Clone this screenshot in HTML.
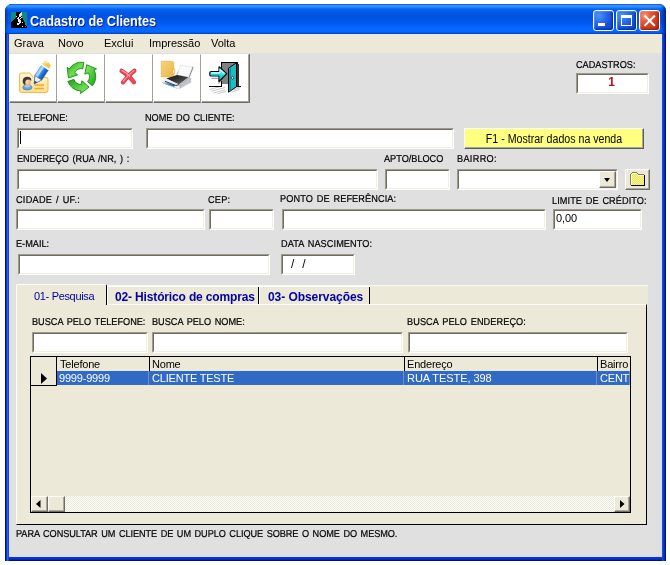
<!DOCTYPE html>
<html>
<head>
<meta charset="utf-8">
<title>Cadastro de Clientes</title>
<style>
*{box-sizing:border-box;margin:0;padding:0}
html,body{width:670px;height:565px;background:#fff;overflow:hidden}
body{font-family:"Liberation Sans",sans-serif;position:relative;color:#000}
.abs{position:absolute}
/* window frame */
#win{position:absolute;left:5px;top:4px;width:661px;height:557px;border-radius:7px 7px 0 0;overflow:hidden;
 background:
  linear-gradient(to right,#00138c 0,#00138c 1px,#0831d9 1px,#0831d9 2px,#2a64e4 2px,#2a64e4 3px,#1a4cc0 3px,#1a4cc0 4px) left top/4px 100% no-repeat,
  linear-gradient(to right,#1c4cd4 0,#1c4cd4 1px,#0838d8 1px,#0838d8 2px,#0428b8 2px,#0428b8 3px,#001080 3px,#001080 4px) right top/4px 100% no-repeat,
  linear-gradient(to bottom,#0a34d4 0,#0a34d4 1px,#0831d9 1px,#0831d9 2px,#0428b8 2px,#0428b8 3px,#001080 3px,#001080 4px) left bottom/100% 4px no-repeat,
  #0831d9}
#title{position:absolute;left:0;top:0;width:661px;height:30px;
 background:linear-gradient(to right,rgba(0,20,130,.55) 0,rgba(0,20,130,0) 3px,rgba(0,20,130,0) 655px,rgba(0,20,130,.35) 658px,rgba(0,16,110,.8) 661px),linear-gradient(to bottom,#0a3fb8 0px,#2f86fb 1px,#3a93ff 2px,#2a8bff 3px,#107afc 4px,#0467f0 5px,#0360ec 6px,#0058e6 8px,#0054e3 10px,#0054e3 14px,#0056e8 17px,#005bf2 20px,#0262fb 22px,#0468ff 25px,#0567ff 28px,#0452e0 29px,#0338b4 30px);}
#client{position:absolute;left:4px;top:30px;width:653px;height:523px;background:#e0e0e0;border:1px solid #d0e2fb;border-top:none}
#menubar{position:absolute;left:-1px;top:0;width:653px;height:19px;background:#ece9d8}
.mi{position:absolute;font-size:11px;line-height:13px;white-space:nowrap}
.ttl{position:absolute;font-size:14px;font-weight:bold;color:#fff;line-height:16px;white-space:nowrap;text-shadow:1px 1px 0 #0a1883;transform:scaleX(.905);transform-origin:0 0}
.lbl{position:absolute;-webkit-text-stroke:.22px #000;font-size:10px;line-height:11px;white-space:nowrap;color:#000;text-rendering:geometricPrecision;transform:translate(-1px,0) scaleX(.915);transform-origin:0 0;word-spacing:1.2px}
.inp{position:absolute;background:#fff;border:1px solid;border-color:#9d9a8c #fff #fff #9d9a8c;}
.inp:before{content:"";position:absolute;left:0;top:0;right:0;bottom:0;border:1px solid;border-color:#6f6d62 #f1efe2 #f1efe2 #6f6d62}
.tb{position:absolute;width:48px;height:49px;background:#fff;border-left:1px solid #fff;border-top:1px solid #fff;border-right:1px solid #a4a298;border-bottom:1px solid #6e6c62;box-shadow:inset 0 -1px 0 #a4a298}

#f1{background:#ffff80;border:1px solid;border-color:#fff #5e5c50 #5e5c50 #fff;box-shadow:inset -1px -1px 0 #a8a694}
#f1 span{position:absolute;left:0;right:0;top:3px;font-size:12px;line-height:14px;text-align:center;white-space:nowrap;transform:scaleX(.885)}
#tabpanel{background:#ece9d8;border:1px solid;border-color:#fff #000 #000 #fff}
#tab1{background:#ece9d8;border-left:1px solid #fff;border-top:1px solid #fff;border-right:1px solid #000;border-radius:2px 2px 0 0}
#tab1 span{position:absolute;left:17px;top:5px;font-size:11px;line-height:13px;color:#00009c;white-space:nowrap;letter-spacing:-.33px}
.tabx{background:#ece9d8;border-top:1px solid #fff}
.tabx:after{content:"";position:absolute;right:0;top:0;width:1px;height:17px;background:#000}
.tabx:before{content:"";position:absolute;left:0;top:0;width:1px;height:17px;background:#fff}
.tabx span{position:absolute;top:3px;font-size:12px;font-weight:bold;line-height:14px;color:#0000a4;white-space:nowrap;letter-spacing:-.15px}
#grid{background:#ece9d8;border:1px solid #000;overflow:hidden}

.cb{position:absolute;top:10px;width:21px;height:21px;border:1px solid #fff;border-radius:3px;background:radial-gradient(circle at 25% 25%,#4f94f8 0%,#2a6bea 35%,#1650d8 65%,#0c3fc0 100%);box-shadow:inset -1px -1px 2px rgba(0,20,120,.55), inset 1px 1px 1px rgba(120,170,255,.5)}
.cb.x{background:radial-gradient(circle at 25% 25%,#f0997a 0%,#e2583a 30%,#d23c1c 60%,#b02a0a 100%);box-shadow:inset -1px -1px 2px rgba(110,20,0,.6), inset 1px 1px 1px rgba(255,180,150,.5)}
.cb svg{position:absolute;left:-1px;top:-1px}

.gh{position:absolute;top:0;height:15px;background:#ece9d8;border-right:1px solid #000;border-bottom:1px solid #000}
.gh span,.gc span{position:absolute;left:2px;top:1px;font-size:11px;line-height:13px;white-space:nowrap;letter-spacing:-.2px}
.gi{position:absolute;background:#ece9d8;border-right:1px solid #000;border-bottom:1px solid #000}
.gr{position:absolute;background:#316ac5}
.gc{position:absolute;top:14px;height:14px;border-right:1px solid #7a8fb8;overflow:hidden}
.gc span{color:#fff;top:1px;left:2px}
#hsb{background-color:#fff;background-image:linear-gradient(45deg,#ece9d8 25%,transparent 25%,transparent 75%,#ece9d8 75%),linear-gradient(45deg,#ece9d8 25%,transparent 25%,transparent 75%,#ece9d8 75%);background-size:2px 2px;background-position:0 0,1px 1px}
.sbtn{position:absolute;width:16px;height:16px;background:#ece9d8;border:1px solid;border-color:#fff #716f64 #716f64 #fff;box-shadow:inset -1px -1px 0 #aca899}
#cbb{position:absolute;right:1px;top:1px;width:17px;height:17px;background:#ece9d8;border:1px solid;border-color:#fff #716f64 #716f64 #fff;box-shadow:inset -1px -1px 0 #aca899}
#cbb:after{content:"";position:absolute;left:4px;top:6px;border:solid transparent;border-width:4px 3.500px 0 3.500px;border-top-color:#000}
#fold{background:#ece9d8;border:1px solid;border-color:#fff #716f64 #716f64 #fff;box-shadow:inset -1px -1px 0 #aca899}
</style>
</head>
<body>
<div id="win">
 <div id="title"></div>
 <div id="client"><div id="menubar"></div></div>
</div>
<!-- everything below is positioned in page coordinates -->
<div id="pg" class="abs" style="left:0;top:0;width:670px;height:565px;will-change:transform">

 <!-- caption icon -->
 <svg class="abs" style="left:11px;top:12px" width="16" height="16" viewBox="0 0 16 16" shape-rendering="crispEdges"><rect width="16" height="16" fill="#0c8c84"/><rect x="5" y="0" width="5" height="1" fill="#000"/><rect x="10" y="0" width="1" height="1" fill="#9cc8c4"/><rect x="5" y="1" width="4" height="1" fill="#000"/><rect x="9" y="1" width="2" height="1" fill="#e6e6e6"/><rect x="5" y="2" width="3" height="1" fill="#000"/><rect x="8" y="2" width="3" height="1" fill="#e6e6e6"/><rect x="5" y="3" width="3" height="1" fill="#000"/><rect x="8" y="3" width="2" height="1" fill="#e6e6e6"/><rect x="10" y="3" width="1" height="1" fill="#9cc8c4"/><rect x="5" y="4" width="1" height="1" fill="#a0e0dc"/><rect x="6" y="4" width="2" height="1" fill="#000"/><rect x="8" y="4" width="2" height="1" fill="#e6e6e6"/><rect x="10" y="4" width="1" height="1" fill="#000"/><rect x="5" y="5" width="2" height="1" fill="#000"/><rect x="7" y="5" width="1" height="1" fill="#e6e6e6"/><rect x="8" y="5" width="2" height="1" fill="#000"/><rect x="10" y="5" width="1" height="1" fill="#e6e6e6"/><rect x="4" y="6" width="2" height="1" fill="#000"/><rect x="6" y="6" width="2" height="1" fill="#e6e6e6"/><rect x="8" y="6" width="1" height="1" fill="#000"/><rect x="9" y="6" width="1" height="1" fill="#e6e6e6"/><rect x="10" y="6" width="2" height="1" fill="#000"/><rect x="3" y="7" width="4" height="1" fill="#000"/><rect x="7" y="7" width="2" height="1" fill="#e6e6e6"/><rect x="9" y="7" width="3" height="1" fill="#000"/><rect x="2" y="8" width="5" height="1" fill="#000"/><rect x="7" y="8" width="3" height="1" fill="#e6e6e6"/><rect x="10" y="8" width="3" height="1" fill="#000"/><rect x="1" y="9" width="6" height="1" fill="#000"/><rect x="7" y="9" width="3" height="1" fill="#e6e6e6"/><rect x="10" y="9" width="3" height="1" fill="#000"/><rect x="0" y="10" width="8" height="1" fill="#000"/><rect x="8" y="10" width="2" height="1" fill="#e6e6e6"/><rect x="10" y="10" width="1" height="1" fill="#000"/><rect x="11" y="10" width="1" height="1" fill="#e6e6e6"/><rect x="12" y="10" width="2" height="1" fill="#000"/><rect x="0" y="11" width="6" height="1" fill="#000"/><rect x="6" y="11" width="3" height="1" fill="#e6e6e6"/><rect x="9" y="11" width="5" height="1" fill="#000"/><rect x="0" y="12" width="6" height="1" fill="#000"/><rect x="6" y="12" width="2" height="1" fill="#e6e6e6"/><rect x="8" y="12" width="6" height="1" fill="#000"/><rect x="0" y="13" width="15" height="1" fill="#000"/><rect x="0" y="14" width="11" height="1" fill="#000"/><rect x="11" y="14" width="1" height="1" fill="#e6e6e6"/><rect x="12" y="14" width="2" height="1" fill="#000"/><rect x="15" y="14" width="1" height="1" fill="#000"/><rect x="0" y="15" width="16" height="1" fill="#000"/></svg>
 <div class="cb" style="left:593px"><svg width="21" height="21"><rect x="5" y="13" width="7" height="3" fill="#fff"/></svg></div>
 <div class="cb" style="left:616px"><svg width="21" height="21"><path d="M5 5h11v11h-11z M6 8v7h9v-7z" fill="#fff" fill-rule="evenodd"/></svg></div>
 <div class="cb x" style="left:639px"><svg width="21" height="21"><path d="M6.200 6.200l9 9M15.200 6.200l-9 9" stroke="#fff" stroke-width="2" stroke-linecap="square"/></svg></div>
 <div class="ttl" style="left:30px;top:13px">Cadastro de Clientes</div>
 <span class="mi" style="left:14px;top:37px">Grava</span>
 <span class="mi" style="left:58px;top:37px">Novo</span>
 <span class="mi" style="left:104px;top:37px">Exclui</span>
 <span class="mi" style="left:149px;top:37px">Impressão</span>
 <span class="mi" style="left:211px;top:37px">Volta</span>

 <!-- toolbar -->
 <div class="tb" style="left:9px;top:54px"></div>
 <div class="tb" style="left:57px;top:54px"></div>
 <div class="tb" style="left:105px;top:54px"></div>
 <div class="tb" style="left:153px;top:54px"></div>
 <div class="tb" style="left:201px;top:54px"></div>
 <div class="abs" style="left:249px;top:54px;width:1px;height:49px;background:#6e6c62"></div>


 <!-- toolbar icons -->
 <svg class="abs" style="left:10px;top:54px" width="48" height="48" viewBox="0 0 48 48">
  <defs>
   <linearGradient id="cardg" x1="0" y1="0" x2="0" y2="1"><stop offset="0" stop-color="#fff6d8"/><stop offset="1" stop-color="#ffe08a"/></linearGradient>
   <linearGradient id="peng" x1="0" y1="0" x2="1" y2="0"><stop offset="0" stop-color="#bfe0ff"/><stop offset=".35" stop-color="#4aa0f0"/><stop offset=".7" stop-color="#1a6fd0"/><stop offset="1" stop-color="#0a4fa8"/></linearGradient>
   <radialGradient id="faceg" cx=".4" cy=".4" r=".7"><stop offset="0" stop-color="#ffe0c0"/><stop offset="1" stop-color="#f0a070"/></radialGradient>
  </defs>
  <path d="M11.500 19h8.500l3.200 4.300h12.800q2 0 2 2v11.200q0 2 -2 2h-24.500q-2 0 -2 -2v-15.500q0 -2 2 -2z" fill="url(#cardg)" stroke="#f5b94a" stroke-width="1"/>
  <rect x="24.500" y="30.300" width="9.500" height="1.500" fill="#f5a623"/>
  <rect x="24.500" y="33.800" width="9.500" height="1.500" fill="#f5a623"/>
  <ellipse cx="17.400" cy="33.400" rx="4.600" ry="2.600" fill="#5aa8e0" stroke="#3a80c0" stroke-width=".6"/>
  <ellipse cx="17.400" cy="32.300" rx="3" ry="1.300" fill="#9fd0f4"/>
  <ellipse cx="17.600" cy="28.300" rx="3.100" ry="3.700" fill="url(#faceg)"/>
  <path d="M12.800 28.500q-.8 -5.500 4.200 -5.800q4.800 0 4.300 4.200q-2 -1.800 -4.500 -1.200q-1.400 .4 -1.600 2.800q0 1.600 .6 2.800q-2.600 -.5 -3 -2.800z" fill="#3a3a3a"/>
  <g transform="translate(24.200 29.900) rotate(33.500)">
   <path d="M0 0l-4.200 -7.500h8.400z" fill="#fbf0d4" stroke="#2a68c0" stroke-width=".7" stroke-linejoin="round"/>
   <path d="M0 0l-1.700 -3h3.400z" fill="#1a4a98"/>
   <rect x="-4.200" y="-19.300" width="8.400" height="11.800" fill="url(#peng)" stroke="#1f5fbc" stroke-width=".5"/>
   <rect x="-2.600" y="-19.300" width="1.600" height="11.800" fill="#d8ecff" opacity=".75"/>
   <rect x="-4.200" y="-21" width="8.400" height="1.800" fill="#f2f8ff"/>
   <path d="M-4.200 -21v-1.300q0 -3.500 4.200 -3.500t4.200 3.500v1.300z" fill="#f7c64a"/>
   <path d="M-2.800 -21.600v-1q0 -2.200 2.600 -2.400" fill="none" stroke="#fff2b8" stroke-width="1.100"/>
  </g>
 </svg>

 <svg class="abs" style="left:58px;top:54px" width="48" height="48" viewBox="0 0 48 48">
  <defs>
   <linearGradient id="gg0" x1="0" y1="0" x2="1" y2="1"><stop offset="0" stop-color="#1e9a18"/><stop offset=".5" stop-color="#6fe050"/><stop offset="1" stop-color="#2fb228"/></linearGradient>
   <linearGradient id="gg1" x1="0" y1="0" x2="1" y2="1"><stop offset="0" stop-color="#1e9a18"/><stop offset=".6" stop-color="#5fd848"/><stop offset="1" stop-color="#7fea60"/></linearGradient>
   <linearGradient id="gg2" x1="0" y1="0" x2="1" y2="1"><stop offset="0" stop-color="#8ff070"/><stop offset=".5" stop-color="#4fcc3c"/><stop offset="1" stop-color="#1e9a18"/></linearGradient>
  </defs>
  <path d="M25.90 8.42 A14.4 14.4 0 0 0 11.19 14.97 L9.14 13.34 L10.47 23.96 L19.56 20.89 L16.62 18.36 A8.0 8.0 0 0 1 24.79 14.72 Z" fill="url(#gg0)" stroke="#168c14" stroke-width="0.9" stroke-linejoin="round"/><path d="M9.87 27.53 A14.4 14.4 0 0 0 22.90 36.99 L22.51 39.58 L31.04 33.12 L23.84 26.78 L23.12 30.60 A8.0 8.0 0 0 1 15.88 25.34 Z" fill="url(#gg1)" stroke="#168c14" stroke-width="0.9" stroke-linejoin="round"/><path d="M34.43 31.86 A14.4 14.4 0 0 0 36.11 15.84 L38.55 14.88 L28.69 10.72 L26.80 20.13 L30.46 18.84 A8.0 8.0 0 0 1 29.53 27.74 Z" fill="url(#gg2)" stroke="#168c14" stroke-width="0.9" stroke-linejoin="round"/>
 </svg>

 <svg class="abs" style="left:106px;top:54px" width="48" height="48" viewBox="0 0 48 48">
  <path d="M15.600 16.800q6 3.400 12.400 11.400" fill="none" stroke="#d02838" stroke-width="4.200" stroke-linecap="round"/>
  <path d="M28.400 16.800q-6.500 4.500 -11.400 11.600" fill="none" stroke="#d02838" stroke-width="4.200" stroke-linecap="round"/>
  <path d="M15.600 16.800q6 3.400 12.400 11.400" fill="none" stroke="#ee4a58" stroke-width="3" stroke-linecap="round"/>
  <path d="M28.400 16.800q-6.500 4.500 -11.400 11.600" fill="none" stroke="#ee4a58" stroke-width="3" stroke-linecap="round"/>
  <path d="M15.800 16.300q5 2.800 8 6" fill="none" stroke="#f8a8ac" stroke-width="1.100" stroke-linecap="round"/>
  <path d="M27.800 16.600q-5.500 4 -10.500 10.500" fill="none" stroke="#f8a0a6" stroke-width="1.100" stroke-linecap="round"/>
 </svg>

 <svg class="abs" style="left:154px;top:54px" width="48" height="48" viewBox="0 0 48 48">
  <defs>
   <linearGradient id="fol" x1="0" y1="0" x2="1" y2="1"><stop offset="0" stop-color="#f7d47c"/><stop offset="1" stop-color="#eab648"/></linearGradient>
   <linearGradient id="prt" x1="0" y1="0" x2="1" y2="1"><stop offset="0" stop-color="#101010"/><stop offset=".6" stop-color="#404040"/><stop offset="1" stop-color="#909090"/></linearGradient>
   <linearGradient id="tray" x1="0" y1="0" x2="1" y2="0"><stop offset="0" stop-color="#9fd0ff"/><stop offset=".5" stop-color="#2a80e0"/><stop offset="1" stop-color="#1060c0"/></linearGradient>
  </defs>
  <path d="M7.300 7.300h11.300l1.200 1v14.600h-12.500z" fill="url(#fol)" stroke="#e6ac3c" stroke-width=".6"/>
  <path d="M18.400 15h2.400v4.700h-2.400z" fill="#fbe8b0" stroke="#d9a030" stroke-width=".6"/>
  <path d="M26.300 11.400l12.100 1.600l-3.800 10l-11.500 -2z" fill="#fbfbfb" stroke="#d0d0d0" stroke-width=".5"/>
  <path d="M38.400 13l.7 .4l-4.200 10.500" fill="none" stroke="#666" stroke-width=".8"/>
  <path d="M24.200 17.500l-1.800 4" fill="none" stroke="#999" stroke-width=".6"/>
  <path d="M7.800 27.200l4.500 -3l10.800 -3.400l11.500 2.400l2.500 1.300v4l-11.400 6.500l-2.600 -.3l-15.300 -6z" fill="#dfe3e7"/>
  <path d="M12.300 24.600l10.800 -3.600l11.300 2.300l-9.400 7.200z" fill="url(#prt)"/>
  <path d="M25 30.500l9.600 -7.200l2.500 1.300v3.700l-11.400 6.400z" fill="#aeb3b9"/>
  <path d="M26.500 30.800l10 -6.300M27 32.300l10 -6.300M27 33.800l10 -6.300" stroke="#dfe2e6" stroke-width=".6" fill="none"/>
  <path d="M7.800 27.200l4.500 -2.600l12.700 5.900l.7 4.200l-2.600 -.3l-15.300 -6z" fill="#eef1f4"/>
  <path d="M9.100 29.600l1.900 -1.300l10.200 3.200l-1.300 1.500z" fill="url(#tray)"/>
  <path d="M13.500 29.300l5 1.600l-1 1.300l-5 -1.700z" fill="#18808c" opacity=".55"/>
  <path d="M8 28.300l15.300 6.200" stroke="#b8bcc2" stroke-width=".6" fill="none"/>
  <path d="M11 27.300l11 4.200l3 -.9" stroke="#222" stroke-width=".9" fill="none"/>
 </svg>

 <svg class="abs" style="left:202px;top:54px" width="48" height="48" viewBox="0 0 48 48" shape-rendering="crispEdges">
  <g stroke="#b4b4b4" stroke-width=".8" shape-rendering="geometricPrecision" opacity=".9">
   <path d="M7.500 35.500l11 -3M9 37.300l14 -3.800M11.500 39l12 -3.300M16 39.600l8 -2.200M29.500 38l8 -2.500M31 36l7.500 -2.300M33 34.300l5 -1.500" fill="none"/>
  </g>
  <rect x="19" y="8" width="16" height="22" fill="#808080"/>
  <path d="M19.500 30v-21.500h15.500v24" fill="none" stroke="#000" stroke-width="1"/>
  <rect x="35" y="9.500" width="2" height="23" fill="#303030"/>
  <path d="M7 32.500h12.500v-2.500M35 32.500h4" fill="none" stroke="#000" stroke-width="1"/>
  <path d="M26.500 14.200l8 -5.500v24l-8 5.500z" fill="#1cbcc4" stroke="#000" stroke-width="1" shape-rendering="geometricPrecision" stroke-linejoin="round"/>
  <path d="M27.300 15l1.500 -1v22.700l-1.500 1z" fill="#0a8890" shape-rendering="geometricPrecision"/>
  <ellipse cx="30.600" cy="23.800" rx="1" ry="1.500" fill="#fff" stroke="#000" stroke-width=".6" shape-rendering="geometricPrecision"/>
  <path d="M9.500 24.300h7.500v4.500l3 -3" fill="none" stroke="#909090" stroke-width="1.200" shape-rendering="geometricPrecision" opacity=".8"/>
  <path d="M9 17.500h8v-4.800l7.800 6.900l-7.800 7.900v-5.500h-8q-1.200 0 -1.200 -1v-2.500q0 -1 1.200 -1z" fill="#38e0e8" stroke="#000" stroke-width="1.100" shape-rendering="geometricPrecision" stroke-linejoin="round"/>
  <path d="M9.200 18.900h8.800v-3.200l4.300 3.800" fill="none" stroke="#d8ffff" stroke-width="1.100" shape-rendering="geometricPrecision"/>
  <path d="M9.200 21h8.800v3.500l3.500 -3.600" fill="none" stroke="#18b0c0" stroke-width="1" shape-rendering="geometricPrecision"/>
 </svg>

 <!-- cadastros -->
 <div class="lbl" style="left:577px;top:60px">CADASTROS:</div>
 <div class="inp" style="left:576px;top:73px;width:73px;height:21px"><div class="abs" style="left:-2px;right:0;top:1px;text-align:center;font-size:12px;font-weight:bold;color:#b8101c;line-height:14px">1</div></div>

 <!-- row 1 -->
 <div class="lbl" style="left:18px;top:113px">TELEFONE:</div>
 <div class="lbl" style="left:146px;top:113px">NOME DO CLIENTE:</div>
 <div class="inp" style="left:17px;top:128px;width:116px;height:21px"><div class="abs" style="left:2px;top:2px;width:1px;height:13px;background:#000"></div></div>
 <div class="inp" style="left:146px;top:128px;width:308px;height:21px"></div>
 <div id="f1" class="abs" style="left:464px;top:128px;width:180px;height:21px"><span>F1 - Mostrar dados na venda</span></div>

 <!-- row 2 -->
 <div class="lbl" style="left:18px;top:154px">ENDEREÇO (RUA /NR, ) :</div>
 <div class="lbl" style="left:385px;top:154px">APTO/BLOCO</div>
 <div class="lbl" style="left:458px;top:154px;letter-spacing:0.36px">BAIRRO:</div>
 <div class="inp" style="left:17px;top:169px;width:361px;height:21px"></div>
 <div class="inp" style="left:385px;top:169px;width:65px;height:21px"></div>
 <div class="inp" style="left:457px;top:169px;width:161px;height:21px"><div id="cbb"></div></div>
 <div id="fold" class="abs" style="left:625px;top:169px;width:25px;height:21px"><svg class="abs" style="left:4px;top:2px" width="15" height="14" viewBox="0 0 15 14" shape-rendering="crispEdges">
   <defs><pattern id="dth" width="2" height="2" patternUnits="userSpaceOnUse"><rect width="2" height="2" fill="#e6e64a"/><rect width="1" height="1" fill="#f6f6a4"/><rect x="1" y="1" width="1" height="1" fill="#f6f6a4"/></pattern></defs>
   <path d="M1 1h6v2h7v10h-13z" fill="url(#dth)"/>
   <path d="M1 1h6v1h-5v11h-1zM7 3h7v1h-7z" fill="#fbfbb0"/>
   <path d="M2 0h5v1h-5zM1 1h1v1h-1zM7 1h1v1h-1zM0 2h1v11h-1zM8 2h6v1h-6z" fill="#7c7c74"/>
   <path d="M14 3h1v11h-1zM1 13h13v1h-13z" fill="#000"/>
  </svg></div>

 <!-- row 3 -->
 <div class="lbl" style="left:17px;top:195px;letter-spacing:0.28px">CIDADE / UF.:</div>
 <div class="lbl" style="left:209px;top:195px;letter-spacing:0.27px">CEP:</div>
 <div class="lbl" style="left:281px;top:194px;letter-spacing:0.13px">PONTO DE REFERÊNCIA:</div>
 <div class="lbl" style="left:553px;top:196px;letter-spacing:0.1px">LIMITE DE CRÉDITO:</div>
 <div class="inp" style="left:16px;top:209px;width:189px;height:21px"></div>
 <div class="inp" style="left:209px;top:209px;width:65px;height:21px"></div>
 <div class="inp" style="left:282px;top:209px;width:264px;height:21px"></div>
 <div class="inp" style="left:553px;top:209px;width:89px;height:21px"><div class="abs" style="left:2px;top:2px;font-size:11px;line-height:13px;letter-spacing:-.1px">0,00</div></div>

 <!-- row 4 -->
 <div class="lbl" style="left:17px;top:239px">E-MAIL:</div>
 <div class="lbl" style="left:282px;top:239px;letter-spacing:0.11px">DATA NASCIMENTO:</div>
 <div class="inp" style="left:18px;top:254px;width:252px;height:21px"></div>
 <div class="inp" style="left:281px;top:254px;width:74px;height:21px"><div class="abs" style="left:9px;top:2px;font-size:12px;line-height:14px;white-space:pre;word-spacing:.6px">/  /</div></div>

 <!-- tabs -->
 <div class="abs" style="left:16px;top:285px;width:632px;height:20px;background:#ece9d8;border-top:1px solid #f8f8f4"></div>
 <div id="tabpanel" class="abs" style="left:16px;top:304px;width:631px;height:221px"></div>
 <div id="tab1" class="abs" style="left:16px;top:284px;width:91px;height:21px"><span>01- Pesquisa</span></div>
 <div class="tabx abs" style="left:107px;top:286px;width:152px;height:18px"><span style="left:8px">02- Histórico de compras</span></div>
 <div class="tabx abs" style="left:259px;top:286px;width:111px;height:18px"><span style="left:9px;letter-spacing:-.06px">03- Observações</span></div>

 <div class="lbl" style="left:33px;top:317px">BUSCA PELO TELEFONE:</div>
 <div class="lbl" style="left:153px;top:317px">BUSCA PELO NOME:</div>
 <div class="lbl" style="left:408px;top:317px;letter-spacing:.1px">BUSCA PELO ENDEREÇO:</div>
 <div class="inp" style="left:32px;top:332px;width:116px;height:21px"></div>
 <div class="inp" style="left:152px;top:332px;width:251px;height:21px"></div>
 <div class="inp" style="left:408px;top:332px;width:220px;height:21px"></div>

 <!-- grid -->
 <div id="grid" class="abs" style="left:30px;top:356px;width:601px;height:157px">
  <div class="gh" style="left:0;width:26px"></div>
  <div class="gh" style="left:26px;width:93px"><span style="left:3px">Telefone</span></div>
  <div class="gh" style="left:119px;width:255px"><span>Nome</span></div>
  <div class="gh" style="left:374px;width:193px"><span>Endereço</span></div>
  <div class="gh" style="left:567px;width:33px"><span>Bairro</span></div>
  <div class="gi" style="left:0;top:14px;width:26px;height:15px"><svg class="abs" style="left:10px;top:2px" width="7" height="11"><path d="M0 0l6 5.500l-6 5.500z" fill="#000"/></svg></div>
  <div class="gr" style="left:26px;top:14px;width:573px;height:14px"></div>
  <div class="gc" style="left:26px;width:92px"><span>9999-9999</span></div>
  <div class="gc" style="left:119px;width:254px"><span>CLIENTE TESTE</span></div>
  <div class="gc" style="left:374px;width:192px"><span style="letter-spacing:-.05px">RUA TESTE, 398</span></div>
  <div class="gc" style="left:567px;width:32px"><span>CENT</span></div>
  <!-- horizontal scrollbar -->
  <div id="hsb" class="abs" style="left:0;top:139px;width:599px;height:16px"></div>
  <div class="sbtn" style="left:0;top:139px;width:17px"><svg class="abs" style="left:4px;top:3px" width="5" height="8"><path d="M4.500 0v8l-4.500 -4z" fill="#000"/></svg></div>
  <div class="sbtn" style="left:17px;top:139px;width:17px"></div>
  <div class="sbtn" style="left:583px;top:139px"><svg class="abs" style="left:5px;top:3px" width="5" height="8"><path d="M0 0v8l4.500 -4z" fill="#000"/></svg></div>
 </div>

 <div class="lbl" style="left:17px;top:529px;letter-spacing:-0.065px">PARA CONSULTAR UM CLIENTE DE UM DUPLO CLIQUE SOBRE O NOME DO MESMO.</div>
</div>
</body>
</html>
